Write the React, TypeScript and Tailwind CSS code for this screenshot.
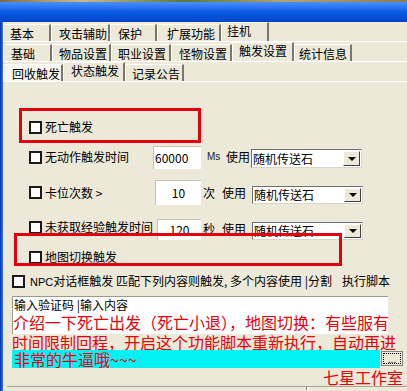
const tabRows = [
  [
    { label: "基本", cls: "w-[48px] pl-[6px]" },
    { label: "攻击辅助", cls: "w-[59px] pl-[7px]" },
    { label: "保护", cls: "w-[47px] pl-[7px]" },
    { label: "扩展功能", cls: "w-[64px] pl-[9px]" },
    { label: "挂机", cls: "w-[48px] pl-[5px]", active: true },
  ],
  [
    { label: "基础", cls: "w-[49px] pl-[7px]" },
    { label: "物品设置", cls: "w-[59px] pl-[6px]" },
    { label: "职业设置", cls: "w-[60px] pl-[6px]" },
    { label: "怪物设置", cls: "w-[61px] pl-[7px]" },
    { label: "触发设置", cls: "w-[62px] pl-[6px]", active: true },
    { label: "统计信息", cls: "w-[58px] pl-[4px]" },
  ],
  [
    { label: "回收触发", cls: "w-[60px] pl-[8px] bg-[#f6f5f0]" },
    { label: "状态触发", cls: "w-[62px] pl-[7px]", active: true },
    { label: "记录公告", cls: "w-[59px] pl-[6px]" },
  ],
];

function Check({ cls = "" }: { cls?: string }) {
  return <span className={`w-[13px] h-[13px] shrink-0 border-2 border-[#1a1a1a] bg-white ${cls}`} />;
}

function Combo({ h, mt }: { h: string; mt: string }) {
  return (
    <div className={`ml-[1px] ${mt} flex w-[111px] ${h} border border-[#6f6f6f] border-r-[#d8d6cc] border-b-[#d8d6cc] bg-white`}>
      <span className="flex-1 flex items-center pl-[1px] text-[12px] leading-none">随机传送石</span>
      <span className="w-[17px] my-[1px] mr-[1px] flex items-center justify-center bg-[#ece9d8] border border-white border-r-[#404040] border-b-[#404040]">
        <span className="border-x-[4px] border-t-[4px] border-x-transparent border-t-black" />
      </span>
    </div>
  );
}

export default function App() {
  return (
    <div className="relative w-[407px] h-[391px] overflow-hidden bg-[#ece9d8] text-black font-['Noto_Sans_CJK_SC','Noto_Sans',sans-serif]">
      <div className="h-[2px] bg-[linear-gradient(90deg,#7d6c4a,#c9b88c_20%,#5a7a3c_45%,#b6a070_70%,#8d7c58)]" />
      <div className="h-[20px] bg-linear-to-b from-[#4a90f6] via-[#0a5ae6] to-[#0046c6]" />

      <div className="flex h-[369px]">
        <div className="w-[3px] bg-linear-to-r from-[#0032ae] to-[#3c74e6]" />
        <div className="flex-1 flex flex-col">
          {tabRows.map((row, i) => (
            <div key={i} className="h-[20px] flex items-end border-b border-white">
              {row.map((t) => (
                <div
                  key={t.label}
                  className={`${t.cls} ${t.active ? "h-[19px] pt-[1px]" : "h-[17px] pt-[2px]"} flex items-start border-l border-t border-white border-r-2 border-r-[#7a786c] text-[12px] leading-[14px] whitespace-nowrap`}
                >
                  {t.label}
                </div>
              ))}
            </div>
          ))}

          <div className="flex flex-col pt-[35px] text-[12px] leading-none">
            <div className="h-[20px] flex items-center pl-[26px] gap-[3px]">
              <Check />
              <span>死亡触发</span>
            </div>

            <div className="mt-[8px] h-[24px] flex items-center pl-[26px]">
              <Check />
              <span className="ml-[3px] w-[108px]">无动作触发时间</span>
              <div className="w-[48px] h-[23px] flex items-center pl-[1px] bg-white border-t border-l border-[#c4c2b6]">60000</div>
              <span className="ml-[6px] w-[13px] font-['Liberation_Sans',sans-serif] text-[10px] text-[#222]">Ms</span>
              <span className="ml-[6px]">使用</span>
              <Combo h="h-[19px]" mt="mt-[3px]" />
            </div>

            <div className="mt-[11px] h-[25px] flex items-center pl-[26px]">
              <Check />
              <span className="ml-[3px] w-[110px]">卡位次数 &gt;</span>
              <div className="w-[46px] h-[25px] flex items-center justify-center bg-white border-t border-l border-[#c4c2b6]">10</div>
              <span className="ml-[2px]">次</span>
              <span className="ml-[7px]">使用</span>
              <span className="ml-[5px]" />
              <Combo h="h-[18px]" mt="mt-[5px]" />
            </div>

            <div className="mt-[13px] h-[22px] flex items-center pl-[26px]">
              <Check cls="mb-[4px]" />
              <span className="ml-[3px] w-[112px] mb-[4px]">未获取经验触发时间</span>
              <div className="w-[44px] h-[21px] flex items-center justify-center bg-white border-t border-l border-[#c4c2b6]">120</div>
              <span className="ml-[2px]">秒</span>
              <span className="ml-[7px]">使用</span>
              <span className="ml-[5px]" />
              <Combo h="h-[18px]" mt="mt-[4px]" />
            </div>

            <div className="mt-[7px] h-[20px] flex items-center pl-[26px] gap-[3px]">
              <Check />
              <span>地图切换触发</span>
            </div>

            <div className="mt-[4px] h-[20px] flex items-center pl-[9px] whitespace-nowrap">
              <Check />
              <span className="ml-[5px] w-[312px]">
                <span className="font-['Liberation_Sans',sans-serif] text-[11px]">NPC</span>对话框触发 匹配下列内容则触发, 多个内容使用 |分割
              </span>
              <span>执行脚本</span>
            </div>

            <div className="mt-[5px] pl-[9px] whitespace-nowrap">
              <div className="w-[376px] h-[38px] bg-white border-t border-l border-[#9c9a8e]">
                <div className="h-[15px] pt-[1px] pl-[1px] text-[12px] leading-[14px]">输入验证码 |输入内容</div>
                <div className="h-[20px] pt-[2px] text-[16px] leading-[17px] text-[#e8000b]">介绍一下死亡出发（死亡小退），地图切换：有些服有</div>
              </div>
              <div className="h-[16px] text-[16px] leading-[16px] text-[#e8000b]">时间限制回程，开启这个功能脚本重新执行，自动再进</div>
              <div className="flex h-[18px]">
                <div className="w-[368px] bg-[#00f2f2] pl-[2px] text-[16px] leading-[18px] text-[#e8000b]">非常的牛逼哦~~~</div>
                <div className="ml-[1px] mt-[1px] w-[22px] h-[15px] p-[1px] border border-[#8a8878] bg-[#ece9d8]">
                  <div className="w-full h-full border border-dotted border-black flex items-end justify-center text-[10px] leading-[9px]">...</div>
                </div>
              </div>
              <div className="h-[18px] pr-[4px] text-right text-[16px] leading-[18px] text-[#e8000b]">七星工作室</div>
              <div className="ml-[-5px] h-[4px] flex border-t border-[#a5a393]">
                <div className="w-[300px] border-r border-[#8a8878]" />
                <div className="w-[2px] border-r border-white" />
              </div>
            </div>
          </div>
        </div>
      </div>

      <div className="absolute left-[19px] top-[108px] w-[182px] h-[35px] border-[3px] border-[#e3000f]" />
      <div className="absolute left-[14px] top-[233px] w-[328px] h-[33px] border-[3px] border-[#e3000f]" />
    </div>
  );
}
